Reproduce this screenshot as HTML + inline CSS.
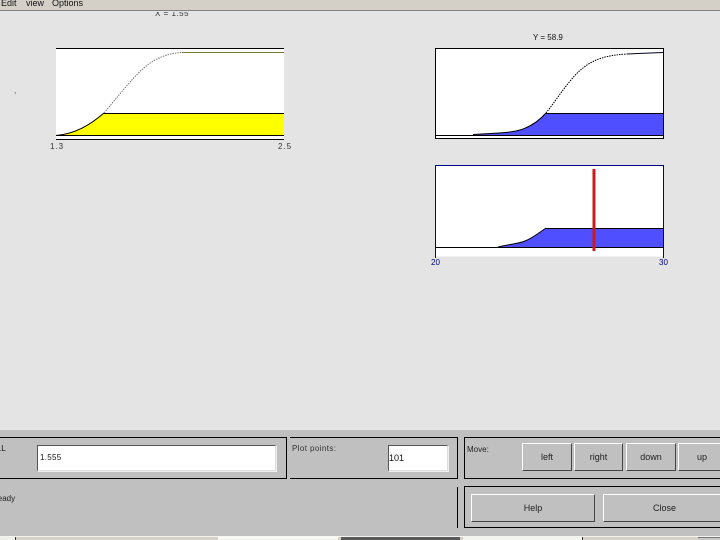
<!DOCTYPE html>
<html><head><meta charset="utf-8"><style>
html,body{margin:0;padding:0;width:720px;height:540px;overflow:hidden;background:#e4e4e4}
body{position:relative;font-family:"Liberation Sans",sans-serif;font-size:9px;color:#111}
.a{position:absolute;box-sizing:border-box}
.t{position:absolute;white-space:nowrap;line-height:10px}
.box{position:absolute;box-sizing:border-box;border:1px solid #000}
.in{position:absolute;box-sizing:border-box;background:#fff;border-top:1px solid #555;border-left:1px solid #555;border-right:1px solid #ddd;border-bottom:1px solid #ddd;box-shadow:1px 1px 0 #eee}
.btn{position:absolute;box-sizing:border-box;background:#c0c0c0;border-top:1px solid #fff;border-left:1px solid #fff;border-right:1px solid #444;border-bottom:1px solid #444;text-align:center;font-size:9px;color:#222;line-height:27px}
</style></head><body>
<div class="a" style="left:0;top:0;width:720px;height:11px;background:#d4d0c8;border-bottom:1px solid #808080"></div>
<div class="t" style="left:1px;top:-2px;font-size:9px">Edit</div>
<div class="t" style="left:26px;top:-2px;font-size:9px">view</div>
<div class="t" style="left:52px;top:-2px;font-size:9px">Options</div>
<div class="a" style="left:150px;top:12px;width:40px;height:5px;overflow:hidden"><div class="t" style="left:5px;top:-3px;font-size:8px;color:#333;letter-spacing:.5px">X = 1.55</div></div>
<div class="t" style="left:14px;top:86px;font-size:8px;color:#444">,</div>

<svg class="a" style="left:0;top:0" width="720" height="300" viewBox="0 0 720 300">
<rect x="56" y="48" width="228" height="91" fill="#fff"/>
<path d="M56 135C75 134 90 125 104 113H284V135H56Z" fill="#ffff00"/>
<path d="M56 48H284M104 113H284M56 135H284M56 139H284" stroke="#000" stroke-width="1" fill="none" transform="translate(0,.5)"/>
<path d="M56 135.5C75 134 90 125 104 113" stroke="#000" fill="none"/>
<path d="M104 113C125 88 140 68 155 60C165 55 172 53 182 52.5" stroke="#777" stroke-dasharray="1.5 1" fill="none"/>
<path d="M182 52.5H284" stroke="#77773a" fill="none"/>

<rect x="435.5" y="48.5" width="228" height="90" fill="#fff" stroke="#000"/>
<path d="M473 135C495 133 510 133 520 130C530 127 538 122 546 113H663V135Z" fill="#4f4fff"/>
<path d="M436 135.5H663M546 113.5H663" stroke="#000" fill="none"/>
<path d="M473 134.5C495 133 510 133 520 130C530 127 538 122 546 113" stroke="#000" fill="none"/>
<path d="M546 113C558 98 570 78 583 68C595 58 610 55 627 54" stroke="#000" stroke-dasharray="1.5 1" fill="none"/>
<path d="M627 54L663 52.5" stroke="#002" fill="none"/>

<rect x="435.5" y="165.5" width="228" height="91" fill="#fff"/>
<path d="M435.5 256V165.5H663.5V256" fill="none" stroke="#00008b"/>
<path d="M435.5 256V258M663.5 256V258" stroke="#00008b"/>
<path d="M498 247C510 244 518 244 525 241C533 238 540 232 546 228H663V247Z" fill="#4f4fff"/>
<path d="M436 247.5H663M546 228.5H663" stroke="#000" fill="none"/>
<path d="M498 247C510 244 518 244 525 241C533 238 540 232 546 228" stroke="#000" fill="none"/>
<rect x="592.5" y="169" width="3" height="82" fill="#cc1a1a"/>
</svg>

<div class="t" style="left:533px;top:33px;font-size:8px">Y = 58.9</div>
<div class="t" style="left:50px;top:142px;font-size:8px;letter-spacing:1px;color:#333">1.3</div>
<div class="t" style="left:278px;top:142px;font-size:8px;letter-spacing:1px;color:#333">2.5</div>
<div class="t" style="left:431px;top:258px;font-size:8px;color:#00008b">20</div>
<div class="t" style="left:659px;top:258px;font-size:8px;color:#00008b">30</div>

<div class="a" style="left:0;top:430px;width:720px;height:106px;background:#c0c0c0"></div>
<div class="a" style="left:0;top:536px;width:720px;height:1px;background:#f4f4ee"></div>
<div class="a" style="left:0;top:537px;width:720px;height:3px;background:#d4d0c8"></div>
<div class="a" style="left:0;top:537px;width:15px;height:3px;background:#f0f0ea"></div>
<div class="a" style="left:15px;top:537px;width:1px;height:3px;background:#333"></div>
<div class="a" style="left:218px;top:537px;width:120px;height:3px;background:#f4f4ee"></div>
<div class="a" style="left:218px;top:537px;width:120px;height:1px;background:#fff"></div>
<div class="a" style="left:341px;top:537px;width:119px;height:3px;background:#5a5a5a"></div>
<div class="a" style="left:463px;top:537px;width:119px;height:3px;background:#f4f4ee"></div>
<div class="a" style="left:582px;top:537px;width:1px;height:3px;background:#333"></div>
<div class="a" style="left:698px;top:537px;width:22px;height:3px;background:#c8c8c8;border-top:1px solid #777"></div>

<div class="box" style="left:-3px;top:437px;width:290px;height:42px"></div>
<div class="t" style="left:-1px;top:444px;font-size:8px">.L</div>
<div class="in" style="left:37px;top:445px;width:239px;height:26px"></div>
<div class="t" style="left:40px;top:453px;font-size:8px;letter-spacing:.3px">1.555</div>

<div class="box" style="left:290px;top:437px;width:168px;height:42px;border-left:none"></div>
<div class="t" style="left:292px;top:444px;font-size:8px;letter-spacing:.4px;color:#333">Plot points:</div>
<div class="in" style="left:388px;top:445px;width:60px;height:26px"></div>
<div class="t" style="left:389px;top:453px;font-size:9px">101</div>

<div class="box" style="left:464px;top:437px;width:262px;height:42px"></div>
<div class="t" style="left:467px;top:445px;font-size:8px;color:#222">Move:</div>
<div class="btn" style="left:522px;top:443px;width:50px;height:28px">left</div>
<div class="btn" style="left:574px;top:443px;width:49px;height:28px">right</div>
<div class="btn" style="left:626px;top:443px;width:50px;height:28px">down</div>
<div class="btn" style="left:678px;top:443px;width:50px;height:28px;padding-right:2px">up</div>

<div class="t" style="left:-8px;top:494px;font-size:8px;color:#222">Ready</div>
<div class="a" style="left:457px;top:487px;width:1px;height:41px;background:#000"></div>
<div class="box" style="left:464px;top:486px;width:262px;height:42px"></div>
<div class="btn" style="left:471px;top:494px;width:124px;height:28px">Help</div>
<div class="btn" style="left:603px;top:494px;width:150px;height:28px;padding-right:27px">Close</div>
</body></html>
